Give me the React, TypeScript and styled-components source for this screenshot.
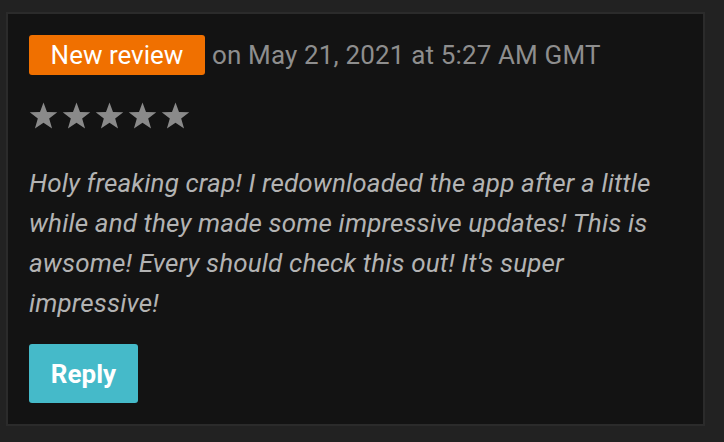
import styled, { createGlobalStyle } from "styled-components";

const GlobalStyle = createGlobalStyle`
  html, body {
    margin: 0;
    padding: 0;
    background: #222222;
  }
  body {
    font-family: Roboto, "Liberation Sans", sans-serif;
  }
`;

const Page = styled.div`
  padding: 12px 6px;
  box-sizing: border-box;
  width: 724px;
  height: 442px;
`;

const Card = styled.div`
  width: 699px;
  height: 414px;
  box-sizing: border-box;
  background: #131313;
  border: 2px solid #2b2b2b;
  padding: 21px;
  display: flex;
  flex-direction: column;
  align-items: flex-start;
`;

const Header = styled.div`
  display: flex;
  align-items: center;
  gap: 7px;
`;

const Badge = styled.span`
  display: inline-flex;
  align-items: center;
  justify-content: center;
  width: 176px;
  height: 40px;
  background: #f07000;
  border-radius: 3px;
  color: #ffffff;
  font-size: 26px;
`;

const DateText = styled.span`
  color: #8e8e8e;
  font-size: 26px;
  letter-spacing: 0.15px;
`;

const Stars = styled.div`
  display: flex;
  gap: 4px;
  margin-top: 27px;
`;

const Text = styled.p`
  margin: 33px 0 0;
  color: #b3b3b3;
  font-style: italic;
  font-size: 26px;
  letter-spacing: 0.15px;
  line-height: 40px;
  width: 640px;
`;

const ReplyButton = styled.button`
  margin-top: 21px;
  width: 109px;
  height: 59px;
  border: none;
  border-radius: 3px;
  background: #45bac9;
  color: #ffffff;
  font-family: Roboto, "Liberation Sans", sans-serif;
  font-weight: 700;
  font-size: 26px;
  padding: 0;
`;

function Star() {
  return (
    <svg width="29" height="28" viewBox="0 0 24 23">
      <path
        d="M12 0.3 L14.9 8.2 L23.4 8.4 L16.7 13.6 L19.1 21.8 L12 17 L4.9 21.8 L7.3 13.6 L0.6 8.4 L9.1 8.2 Z"
        fill="#8a8a8a"
      />
    </svg>
  );
}

export default function App() {
  return (
    <Page>
      <GlobalStyle />
      <Card>
        <Header>
          <Badge>New review</Badge>
          <DateText>on May 21, 2021 at 5:27 AM GMT</DateText>
        </Header>
        <Stars>
          {[0, 1, 2, 3, 4].map((i) => (
            <Star key={i} />
          ))}
        </Stars>
        <Text>
          Holy freaking crap! I redownloaded the app after a little while and
          they made some impressive updates! This is awsome! Every should check
          this out! It's super impressive!
        </Text>
        <ReplyButton>Reply</ReplyButton>
      </Card>
    </Page>
  );
}
